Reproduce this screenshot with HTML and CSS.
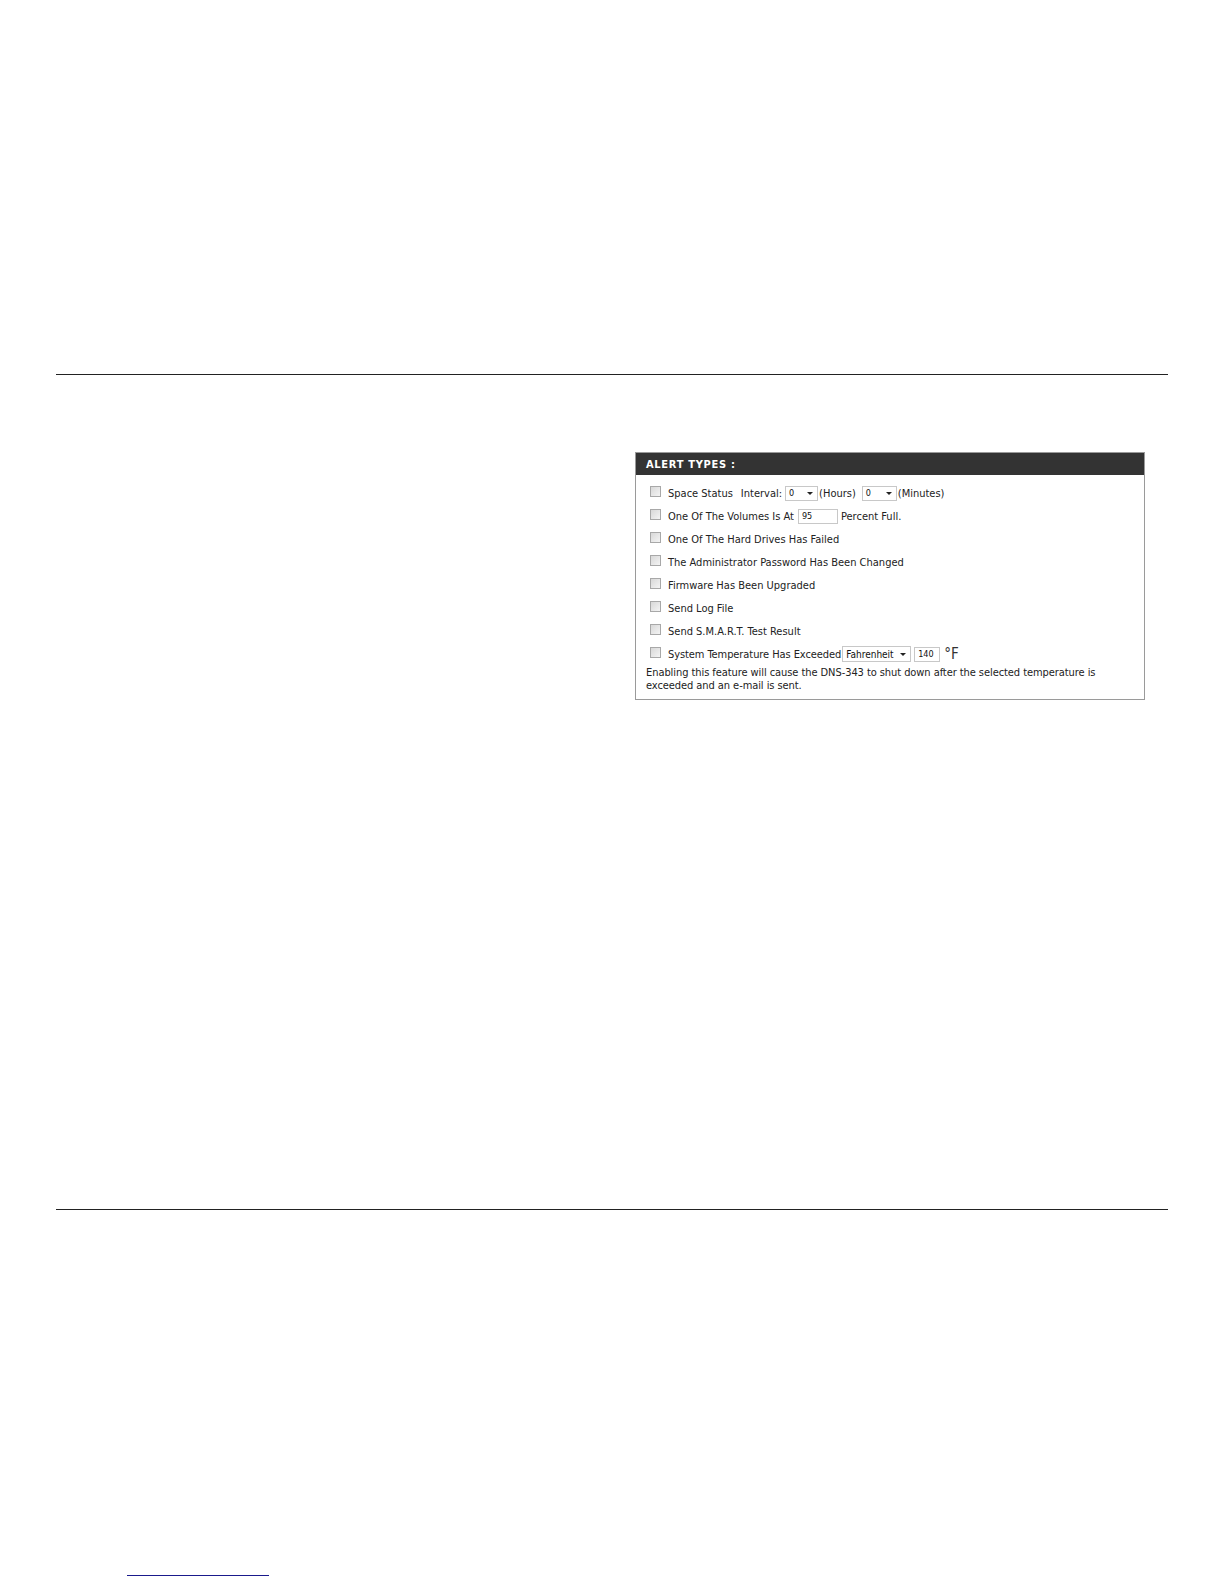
FILE: index.html
```html
<!DOCTYPE html>
<html>
<head>
<meta charset="utf-8">
<link rel="stylesheet" href="styles.css">
</head>
<body>
<div class="page">
  <div class="top-space"></div>
  <div class="rule"></div>
  <div class="content">
    <div class="panel">
      <div class="panel-head">ALERT TYPES :</div>
      <div class="panel-body">
        <div class="row"><span class="cb"></span><span class="lbl">Space Status</span><span class="gap"></span><span>Interval:</span><span class="sel w32 ml3"><span>0</span><span class="arr"></span></span><span>(Hours)</span><span class="sel w34 ml6"><span>0</span><span class="arr"></span></span><span>(Minutes)</span></div>
        <div class="row"><span class="cb"></span><span class="lbl">One Of The Volumes Is At</span><span class="inp w40 ml4">95</span><span class="ml2">Percent Full.</span></div>
        <div class="row"><span class="cb"></span><span class="lbl">One Of The Hard Drives Has Failed</span></div>
        <div class="row"><span class="cb"></span><span class="lbl">The Administrator Password Has Been Changed</span></div>
        <div class="row"><span class="cb"></span><span class="lbl">Firmware Has Been Upgraded</span></div>
        <div class="row"><span class="cb"></span><span class="lbl">Send Log File</span></div>
        <div class="row"><span class="cb"></span><span class="lbl">Send S.M.A.R.T. Test Result</span></div>
        <div class="row last"><span class="cb"></span><span class="lbl tight">System Temperature Has Exceeded</span><span class="sel w70 big"><span>Fahrenheit</span><span class="arr"></span></span><span class="inp w26 ml2">140</span><span class="deg">°F</span></div>
        <div class="note">Enabling this feature will cause the DNS-343 to shut down after the selected temperature is exceeded and an e-mail is sent.</div>
      </div>
    </div>
  </div>
  <div class="rule"></div>
  <div class="bottom-space"></div>
  <div class="link-line"></div>
</div>
</body>
</html>
```

FILE: styles.css
```css
html, body {
  margin: 0;
  padding: 0;
  background: #fff;
}
.page {
  width: 1224px;
  height: 1584px;
  padding-left: 56px;
  box-sizing: border-box;
  font-family: "DejaVu Sans Condensed", "DejaVu Sans", sans-serif;
  color: #222;
  overflow: hidden;
}
.top-space {
  height: 374px;
}
.rule {
  width: 1112px;
  height: 1px;
  background: #222;
}
.content {
  height: 834px;
  padding-top: 77px;
  padding-left: 579px;
  box-sizing: border-box;
}
.panel {
  width: 510px;
  border: 1px solid #9a9a9a;
  box-sizing: border-box;
  background: #fff;
}
.panel-head {
  background: #333333;
  color: #fff;
  font-weight: bold;
  font-size: 11px;
  height: 22px;
  line-height: 23px;
  padding-left: 10px;
  letter-spacing: 0.7px;
}
.panel-body {
  padding: 10px 10px 7px 10px;
  font-size: 11px;
}
.row {
  display: flex;
  align-items: center;
  height: 16px;
  margin-bottom: 7px;
  white-space: nowrap;
}
.row.last {
  margin-bottom: 4px;
}
.cb {
  width: 9px;
  height: 9px;
  border: 1px solid #a8a8a8;
  background: linear-gradient(135deg, #d8d8d8, #f4f4f4);
  margin-left: 4px;
  margin-right: 7px;
  margin-top: -3px;
  flex: none;
}
.tight {
  letter-spacing: -0.08px;
}
.gap {
  width: 8px;
}
.sel, .inp {
  display: inline-flex;
  align-items: center;
  justify-content: space-between;
  height: 15px;
  border: 1px solid #c8c8c8;
  box-sizing: border-box;
  font-size: 9px;
  padding: 0 4px 0 3px;
  margin: 0 1px 0 1px;
  background: #fff;
  color: #111;
}
.sel.big {
  font-size: 10px;
  height: 16px;
}
.inp {
  justify-content: flex-start;
}
.arr {
  width: 0;
  height: 0;
  border-left: 3px solid transparent;
  border-right: 3px solid transparent;
  border-top: 3px solid #222;
}
.w32 { width: 33px; }
.w34 { width: 35px; }
.w40 { width: 40px; }
.w70 { width: 69px; }
.w26 { width: 26px; }
.ml6 { margin-left: 6px; }
.ml4 { margin-left: 4px; }
.ml3 { margin-left: 3px; }
.ml2 { margin-left: 2px; }
.deg {
  font-size: 15px;
  margin-left: 3px;
  color: #333;
}
.note {
  font-size: 11px;
  line-height: 13px;
  color: #222;
  letter-spacing: -0.07px;
}
.bottom-space {
  height: 365px;
}
.link-line {
  width: 142px;
  height: 1px;
  margin-left: 71px;
  background: #1a1a8c;
}
```
